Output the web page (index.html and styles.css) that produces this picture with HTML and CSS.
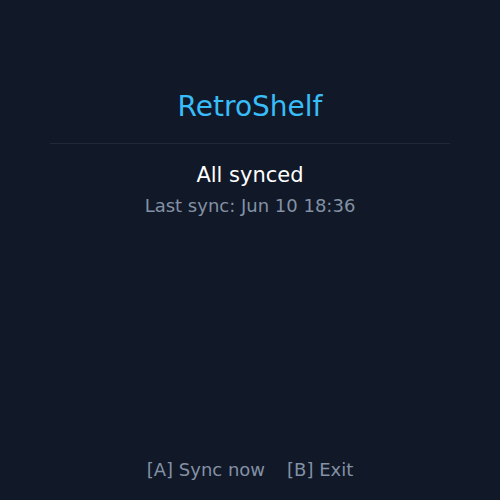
FILE: index.html
```html
<!DOCTYPE html>
<html lang="en">
<head>
    <meta charset="UTF-8">
    <title>RetroShelf</title>
    <link rel="stylesheet" href="styles.css">
</head>
<body>
<div class="screen">
    <div class="header">
        <div class="title">RetroShelf</div>
        <div class="divider"></div>
    </div>
    <div class="status">All synced</div>
    <div class="last-sync">Last sync: Jun 10 18:36</div>
    <div class="footer">
        <span class="hint">[A] Sync now</span>
        <span class="hint">[B] Exit</span>
    </div>
</div>
</body>
</html>
```

FILE: styles.css
```css
html {
    height: 100%;
}
body {
    margin: 0;
    height: 100%;
    background: #111827;
    font-family: "DejaVu Sans", sans-serif;
    color: #f9fafb;
}
.screen {
    display: flex;
    flex-direction: column;
    align-items: center;
    height: 100%;
    box-sizing: border-box;
    padding: 0 50px 19px;
}
.header {
    width: 100%;
    display: flex;
    flex-direction: column;
    align-items: center;
    padding-top: 90px;
}
.title {
    font-size: 28px;
    line-height: 33px;
    color: #38bdf8;
}
.divider {
    width: 100%;
    height: 1px;
    margin-top: 20px;
    background: #1f2937;
}
.status {
    margin-top: 19px;
    font-size: 21px;
    line-height: 25px;
    color: #ffffff;
}
.last-sync {
    margin-top: 7px;
    font-size: 18px;
    line-height: 22px;
    color: #8391a5;
}
.footer {
    margin-top: auto;
    display: flex;
    gap: 22px;
    font-size: 18px;
    line-height: 22px;
    color: #8391a5;
}
```
